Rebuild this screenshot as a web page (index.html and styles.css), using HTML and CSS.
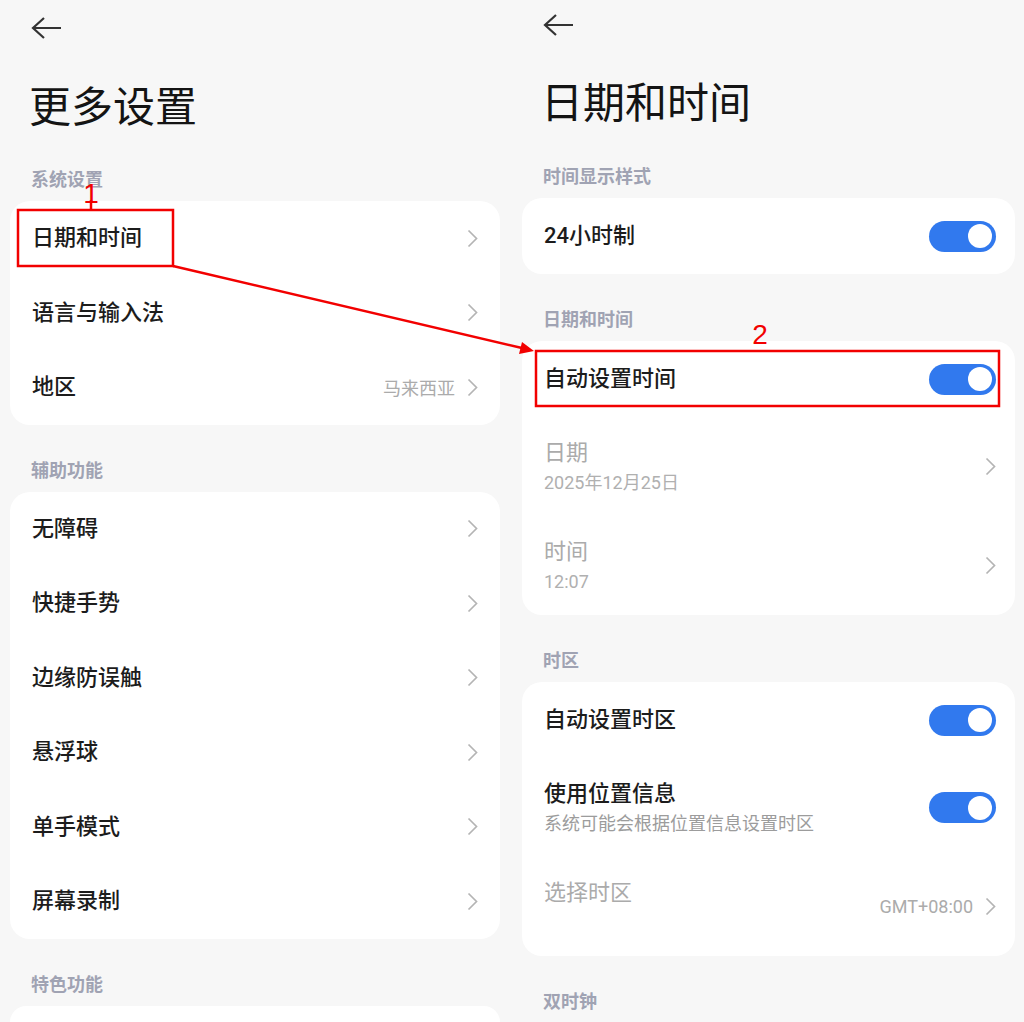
FILE: index.html
```html
<!DOCTYPE html>
<html>
<head>
  <link rel="stylesheet" href="styles.css">
</head>
<body>
  <div class="screen">
    <section class="panel panel-left">
      <div class="topbar">
        <svg class="back" width="32" height="24" viewBox="0 0 32 24"><path d="M30 12H2M13 2L2 12l11 10" fill="none" stroke="#333" stroke-width="2.2"/></svg>
      </div>
      <h1 class="title">更多设置</h1>

      <div class="group-label">系统设置</div>
      <div class="card">
        <div class="row"><span class="row-title">日期和时间</span><span class="row-end"><svg class="chevron" width="11" height="19" viewBox="0 0 11 19"><path d="M1.5 1.5l8 8-8 8" /></svg></span></div>
        <div class="row"><span class="row-title">语言与输入法</span><span class="row-end"><svg class="chevron" width="11" height="19" viewBox="0 0 11 19"><path d="M1.5 1.5l8 8-8 8" /></svg></span></div>
        <div class="row"><span class="row-title">地区</span><span class="row-end"><span class="row-value">马来西亚</span><svg class="chevron" width="11" height="19" viewBox="0 0 11 19"><path d="M1.5 1.5l8 8-8 8" /></svg></span></div>
      </div>

      <div class="group-label">辅助功能</div>
      <div class="card">
        <div class="row"><span class="row-title">无障碍</span><span class="row-end"><svg class="chevron" width="11" height="19" viewBox="0 0 11 19"><path d="M1.5 1.5l8 8-8 8" /></svg></span></div>
        <div class="row"><span class="row-title">快捷手势</span><span class="row-end"><svg class="chevron" width="11" height="19" viewBox="0 0 11 19"><path d="M1.5 1.5l8 8-8 8" /></svg></span></div>
        <div class="row"><span class="row-title">边缘防误触</span><span class="row-end"><svg class="chevron" width="11" height="19" viewBox="0 0 11 19"><path d="M1.5 1.5l8 8-8 8" /></svg></span></div>
        <div class="row"><span class="row-title">悬浮球</span><span class="row-end"><svg class="chevron" width="11" height="19" viewBox="0 0 11 19"><path d="M1.5 1.5l8 8-8 8" /></svg></span></div>
        <div class="row"><span class="row-title">单手模式</span><span class="row-end"><svg class="chevron" width="11" height="19" viewBox="0 0 11 19"><path d="M1.5 1.5l8 8-8 8" /></svg></span></div>
        <div class="row"><span class="row-title">屏幕录制</span><span class="row-end"><svg class="chevron" width="11" height="19" viewBox="0 0 11 19"><path d="M1.5 1.5l8 8-8 8" /></svg></span></div>
      </div>

      <div class="group-label">特色功能</div>
      <div class="card card-tail"></div>
    </section>

    <section class="panel panel-right">
      <div class="topbar">
        <svg class="back" width="32" height="24" viewBox="0 0 32 24"><path d="M30 12H2M13 2L2 12l11 10" fill="none" stroke="#333" stroke-width="2.2"/></svg>
      </div>
      <h1 class="title">日期和时间</h1>

      <div class="group-label">时间显示样式</div>
      <div class="card">
        <div class="row row-single"><span class="row-title">24小时制</span><span class="toggle on"></span></div>
      </div>

      <div class="group-label">日期和时间</div>
      <div class="card">
        <div class="row row-single"><span class="row-title">自动设置时间</span><span class="toggle on"></span></div>
        <div class="row row-double disabled">
          <div class="row-text"><span class="row-title">日期</span><span class="row-sub">2025年12月25日</span></div>
          <span class="row-end"><svg class="chevron" width="11" height="19" viewBox="0 0 11 19"><path d="M1.5 1.5l8 8-8 8" /></svg></span>
        </div>
        <div class="row row-double disabled">
          <div class="row-text"><span class="row-title">时间</span><span class="row-sub">12:07</span></div>
          <span class="row-end"><svg class="chevron" width="11" height="19" viewBox="0 0 11 19"><path d="M1.5 1.5l8 8-8 8" /></svg></span>
        </div>
      </div>

      <div class="group-label">时区</div>
      <div class="card">
        <div class="row row-single"><span class="row-title">自动设置时区</span><span class="toggle on"></span></div>
        <div class="row row-double">
          <div class="row-text"><span class="row-title">使用位置信息</span><span class="row-sub">系统可能会根据位置信息设置时区</span></div>
          <span class="toggle on"></span>
        </div>
        <div class="row row-double disabled">
          <div class="row-text"><span class="row-title">选择时区</span><span class="row-sub">&nbsp;</span></div>
          <span class="row-end"><span class="row-value">GMT+08:00</span><svg class="chevron" width="11" height="19" viewBox="0 0 11 19"><path d="M1.5 1.5l8 8-8 8" /></svg></span>
        </div>
      </div>

      <div class="group-label">双时钟</div>
    </section>
  </div>

  <!-- red guide marks drawn over the screenshots -->
  <svg class="marks" width="1024" height="1022" viewBox="0 0 1024 1022">
    <g fill="none" stroke="#f20000" stroke-width="2.5">
      <rect x="18" y="210" width="155" height="56" />
      <rect x="536" y="351" width="463" height="55" />
      <line x1="91" y1="200" x2="91" y2="210" />
      <line x1="173" y1="266" x2="522" y2="348" />
    </g>
    <path d="M534 351L519 354L522 342Z" fill="#f20000" />
    <text x="91" y="203" class="mark-num" text-anchor="middle">1</text>
    <text x="760" y="344" class="mark-num" text-anchor="middle">2</text>
  </svg>
</body>
</html>
```

FILE: styles.css
```css
body {
  margin: 0;
  width: 1024px;
  height: 1022px;
  overflow: hidden;
  position: relative;
  background: #f7f7f7;
  font-family: Roboto, "Noto Sans CJK SC", sans-serif;
  color: #1c1c1c;
}
.screen {
  display: grid;
  grid-template-columns: 512px 512px;
  height: 1022px;
  overflow: hidden;
}
.panel {
  display: flex;
  flex-direction: column;
  padding: 0 12px 0 10px;
}
.panel-right {
  padding: 0 9px 0 10px;
}
.topbar {
  height: 56px;
  display: flex;
  align-items: center;
  padding-left: 21px;
}
.panel-right .topbar {
  height: 50px;
}
.title {
  margin: 24px 0 38px 0;
  padding-left: 19px;
  font-family: "Noto Sans CJK SC", sans-serif;
  font-size: 42px;
  font-weight: 400;
  line-height: 48px;
  color: #141414;
}
.panel-right .title {
  margin: 26px 0 39px 0;
}
.group-label {
  padding: 32px 0 11px 21px;
  font-family: "Noto Sans CJK SC", sans-serif;
  font-size: 18px;
  line-height: 24px;
  font-weight: 700;
  color: #a0a3b3;
}
.title + .group-label {
  padding-top: 0;
}
.card {
  background: #fff;
  border-radius: 20px;
}
.card-tail {
  height: 16px;
  border-radius: 20px 20px 0 0;
}
.row {
  height: 74.5px;
  display: flex;
  align-items: center;
  justify-content: space-between;
  padding: 0 22px 0 22px;
}
.panel-right .row {
  padding: 0 19px 0 22px;
}
.row-single {
  height: 76px;
}
.row-double {
  height: 99px;
}
.row-title {
  font-size: 22px;
  line-height: 32px;
  font-weight: 500;
  color: #1c1c1c;
}
.row-text {
  display: flex;
  flex-direction: column;
}
.row-sub {
  font-size: 18px;
  line-height: 28px;
  color: #9c9c9c;
}
.disabled .row-title {
  color: #ababab;
  font-weight: 400;
}
.disabled .row-sub {
  color: #b0b0b0;
}
.row-end {
  display: flex;
  align-items: center;
  gap: 12px;
}
.row-value {
  font-size: 18px;
  color: #ababab;
}
.chevron path {
  fill: none;
  stroke: #b4b4b4;
  stroke-width: 1.7;
}
.toggle {
  width: 67px;
  height: 31px;
  border-radius: 16px;
  background: #ccc;
  position: relative;
}
.toggle.on {
  background: #3179ee;
}
.toggle::after {
  content: "";
  position: absolute;
  top: 3.5px;
  left: 4px;
  width: 24px;
  height: 24px;
  border-radius: 50%;
  background: #fff;
}
.toggle.on::after {
  left: auto;
  right: 4px;
}
.marks {
  position: absolute;
  left: 0;
  top: 0;
  pointer-events: none;
}
.mark-num {
  font-family: "Liberation Sans", sans-serif;
  font-size: 28px;
  fill: #f20000;
}
```
